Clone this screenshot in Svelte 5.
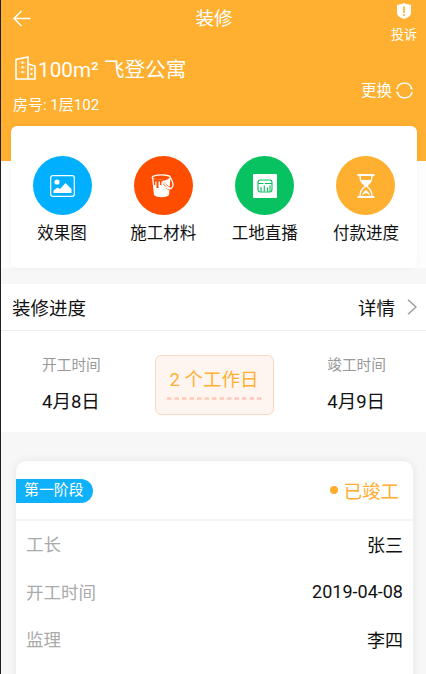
<script>
  const actions = [
    { icon: 'image', label: '效果图', color: '#00b0ff' },
    { icon: 'paint', label: '施工材料', color: '#ff4d00' },
    { icon: 'live', label: '工地直播', color: '#08c160' },
    { icon: 'hourglass', label: '付款进度', color: '#ffb031' }
  ];

  const details = [
    { label: '工长', value: '张三' },
    { label: '开工时间', value: '2019-04-08' },
    { label: '监理', value: '李四' }
  ];
</script>

<div class="page">
  <div class="top">
    <header class="hero">
      <nav class="navbar">
        <svg class="back" width="18" height="17" viewBox="0 0 18 17" fill="none" stroke="currentColor" stroke-width="1.5"><path d="M17.500 8.500H1M8.500 1 1 8.500 8.500 16" /></svg>
        <h1>装修</h1>
        <div class="complain">
          <svg width="14" height="16" viewBox="0 0 14 16"><path fill="currentColor" d="M7 0c2 1 4 1.500 7 1.800V10c0 3-3 4.500-7 6-4-1.500-7-3-7-6V1.800C3 1.500 5 1 7 0Z" /><path stroke="#ffb031" stroke-width="1.700" d="M7 3.500v6.500M7 11.300v1.700" /></svg>
          <span>投诉</span>
        </div>
      </nav>
      <div class="house">
        <div class="house-info">
          <div class="house-name">
            <svg width="21" height="24" viewBox="0 0 21 24" fill="none" stroke="currentColor" stroke-width="1.600"><path d="M1 23V3.500L13 1v22H1ZM13 8l7 2v13h-7" /><path stroke-width="2.200" stroke-dasharray="2.200 2.600" d="M7.500 5.500v14" /><path stroke-width="1.200" stroke-dasharray="2.200 2.600" d="M4.500 5.500v14M10 5.500v14" opacity=".35" /><path stroke-width="2" stroke-dasharray="2.200 2.600" d="M16.500 12v9" /></svg>
            <span>100m² 飞登公寓</span>
          </div>
          <div class="room">房号: 1层102</div>
        </div>
        <div class="change">
          <span>更换</span>
          <svg width="17" height="17" viewBox="0 0 17 17" fill="none" stroke="currentColor" stroke-width="1.400"><path d="M.8 7.200a7.800 7.800 0 0 1 15-.700l-1.600-.700M16.200 9.800a7.800 7.800 0 0 1-15 .700l1.600.700" /></svg>
        </div>
      </div>
    </header>

    <section class="actions">
      {#each actions as action}
        <div class="action">
          <div class="circle" style:background={action.color}>
            {#if action.icon === 'image'}
              <svg width="25" height="22" viewBox="0 0 25 22"><rect x=".7" y=".7" width="23.600" height="20.600" rx="2" fill="none" stroke="currentColor" stroke-width="1.200" /><circle cx="7" cy="7" r="2.600" fill="currentColor" /><path fill="currentColor" d="M3.500 18v-2.500l4-3 2.500 1.500L15.500 8l6 6v4h-18Z" /></svg>
            {:else if action.icon === 'paint'}
              <svg width="24" height="24" viewBox="0 0 24 24"><path fill="currentColor" d="M1 3.500h18.500L18 21c-3 3-12 3-15 0Z" /><ellipse cx="10.300" cy="3.500" rx="9.200" ry="2.600" fill="#ff4d00" stroke="currentColor" stroke-width="1.200" /><path fill="#ff4d00" d="M2.500 4.500c4 1.300 11 1.300 16-.500-2 2.500-6 2-8 3.500v3.500H9V7.500H7.500V14H5.500V7.500H4.300V11H3Z" /><path fill="none" stroke="#ff4d00" stroke-width="3.400" d="M11 9.500c3-1 4 5 7.500 5 2 0 2.500-2 2.500-4" /><path fill="none" stroke="currentColor" stroke-width="1.300" d="M19 3.500c2 2 4 7 2.500 9.500-2 4-6.500-1.500-8-3.500-1.500-1.500-3-.500-2 1 2 2.500 6 5.500 9 4" /></svg>
            {:else if action.icon === 'live'}
              <svg width="24" height="24" viewBox="0 0 24 24"><rect width="24" height="24" rx="1" fill="currentColor" /><g fill="none" stroke="#08c160" stroke-width="1.100"><rect x="5" y="6" width="14" height="12" rx="2.500" /><path d="M5 9.500h5.500m1.500 0h7M8 17.500v-4.500m3.300 4.500v-6m3.200 6v-4m2.500 4v-6" /></g></svg>
            {:else}
              <svg width="18" height="24" viewBox="0 0 18 24"><path fill="none" stroke="currentColor" stroke-width="1.800" d="M.5 1h17M.5 23h17" /><path fill="none" stroke="currentColor" stroke-width="1.400" d="M3 1c0 6 1.500 7.500 5.500 11-4 3.500-5.500 5-5.500 11M15 1c0 6-1.500 7.500-5.500 11 4 3.500 5.500 5 5.500 11" /><path fill="currentColor" d="M4 6h10c-1 3-3 4-5 6-2-2-4-3-5-6ZM5 22c.500-3 2-4.500 4-6 2 1.500 3.500 3 4 6-1-1.500-2.500-2.500-4-3-1.500.500-3 1.500-4 3Z" /></svg>
            {/if}
          </div>
          <span>{action.label}</span>
        </div>
      {/each}
    </section>
  </div>

  <section class="progress">
    <div class="progress-head">
      <h2>装修进度</h2>
      <div class="more">
        <span>详情</span>
        <svg width="10" height="16" viewBox="0 0 10 16" fill="none" stroke="#999" stroke-width="1.400"><path d="m1 .7 8 7.300-8 7.300" /></svg>
      </div>
    </div>
    <div class="dates">
      <div class="date">
        <span>开工时间</span>
        <strong>4月8日</strong>
      </div>
      <div class="days">
        <span>2 个工作日</span>
        <svg width="95" height="3" viewBox="0 0 95 3"><path stroke="#ffc7b8" stroke-width="2.400" stroke-dasharray="4.500 3" d="M0 1.500h95" /></svg>
      </div>
      <div class="date">
        <span>竣工时间</span>
        <strong>4月9日</strong>
      </div>
    </div>
  </section>

  <section class="stage">
    <div class="stage-head">
      <span class="tag">第一阶段</span>
      <span class="status">已竣工</span>
    </div>
    <div class="rows">
      {#each details as row}
        <div class="row">
          <span>{row.label}</span>
          <span class="value">{row.value}</span>
        </div>
      {/each}
    </div>
  </section>
</div>

<style>
  :global(body) {
    background: #f7f7f7;
  }

  .page {
    box-sizing: border-box;
    height: 674px;
    overflow: hidden;
    border-left: 1px solid #221f1f;
    background: #f7f7f7;
    color: #111;
    font-family: Roboto, "Noto Sans CJK SC", sans-serif;
  }

  svg {
    display: block;
    flex-shrink: 0;
  }

  h1,
  h2 {
    margin: 0;
    font-weight: 400;
  }

  .top {
    background: #fdfdfd;
  }

  .hero {
    box-sizing: border-box;
    height: 161px;
    background: #ffb031;
    color: #fff;
  }

  .navbar {
    display: grid;
    grid-template-columns: 1fr auto 1fr;
    height: 50px;
    padding: 0 9px 0 12px;
  }

  .back {
    margin-top: 10px;
  }

  h1 {
    margin-top: 6px;
    margin-right: 2px;
    font-size: 18.5px;
    line-height: 27px;
  }

  .complain {
    display: flex;
    flex-direction: column;
    align-items: center;
    justify-self: end;
    margin-top: 3px;
    font-size: 13px;
    line-height: 20px;
  }

  .complain span {
    margin-top: 6px;
  }

  .house {
    display: flex;
    justify-content: space-between;
    padding: 4px 13px 0 12px;
  }

  .house-name {
    display: flex;
    align-items: center;
    gap: 2px;
    height: 28px;
    padding-left: 2px;
    font-size: 20.7px;
  }

  .room {
    margin-top: 13px;
    font-size: 15px;
    line-height: 20px;
  }

  .change {
    display: flex;
    align-items: center;
    gap: 4px;
    height: 24px;
    margin-top: 24px;
    font-size: 15.5px;
  }

  .change span {
    margin-top: -2px;
  }

  .actions {
    display: grid;
    grid-template-columns: repeat(4, 101.3px);
    justify-content: center;
    box-sizing: border-box;
    height: 142px;
    margin: -35px 9px 0 10px;
    padding-top: 30px;
    border-radius: 6px;
    background: #fff;
    box-shadow: 0 0 6px rgba(0, 0, 0, 0.04);
  }

  .action {
    display: flex;
    flex-direction: column;
    align-items: center;
    font-size: 16.5px;
    line-height: 24px;
  }

  .circle {
    display: flex;
    align-items: center;
    justify-content: center;
    width: 59px;
    height: 59px;
    margin-bottom: 7px;
    border-radius: 50%;
    color: #fff;
  }

  .progress {
    margin-top: 16px;
    background: #fff;
  }

  .progress-head {
    display: flex;
    align-items: center;
    justify-content: space-between;
    height: 46px;
    padding: 0 9px 0 11px;
    border-bottom: 1px solid #eee;
    font-size: 18.5px;
  }

  .progress-head h2,
  .progress-head span {
    margin-top: -1px;
    font-size: inherit;
  }

  .more {
    display: flex;
    align-items: center;
    gap: 12px;
  }

  .dates {
    display: flex;
    align-items: flex-start;
    justify-content: space-between;
    box-sizing: border-box;
    height: 101px;
    padding: 24px 40px 0 41px;
  }

  .date {
    display: flex;
    flex-direction: column;
    gap: 13px;
  }

  .date span {
    margin-top: -1px;
    color: #999;
    font-size: 14.7px;
    line-height: 22px;
  }

  .date strong {
    font-size: 18.5px;
    font-weight: 400;
    line-height: 26px;
  }

  .days {
    display: flex;
    flex-direction: column;
    align-items: center;
    box-sizing: border-box;
    width: 119px;
    height: 60px;
    border: 1px solid #f8d9c4;
    border-radius: 6px;
    background: #fff5f0;
    color: #ffb031;
    font-size: 18.5px;
    line-height: 26px;
  }

  .days span {
    margin: 11px 0 4px;
  }

  .stage {
    height: 240px;
    margin: 29px 13px 0 15px;
    border-radius: 10px 10px 0 0;
    background: #fff;
    box-shadow: 0 0 10px rgba(0, 0, 0, 0.08);
  }

  .stage-head {
    display: flex;
    align-items: center;
    justify-content: space-between;
    height: 58px;
    padding-right: 14px;
    border-bottom: 2px solid #f3f3f3;
  }

  .tag {
    box-sizing: border-box;
    width: 77px;
    height: 24px;
    margin-top: 1px;
    padding-left: 8px;
    border-radius: 0 12px 12px 0;
    background: #10b1fb;
    color: #fff;
    font-size: 14.9px;
    line-height: 22px;
  }

  .status {
    display: flex;
    align-items: center;
    gap: 6px;
    color: #ffac2f;
    font-size: 18.4px;
  }

  .status::before {
    width: 8px;
    height: 8px;
    border-radius: 50%;
    background: currentColor;
    content: "";
  }

  .rows {
    margin-top: -1px;
  }

  .row {
    display: flex;
    align-items: center;
    justify-content: space-between;
    height: 47.5px;
    padding: 0 10px;
    color: #aaa;
    font-size: 17.5px;
  }

  .value {
    color: #111;
    font-size: 18px;
  }
</style>
